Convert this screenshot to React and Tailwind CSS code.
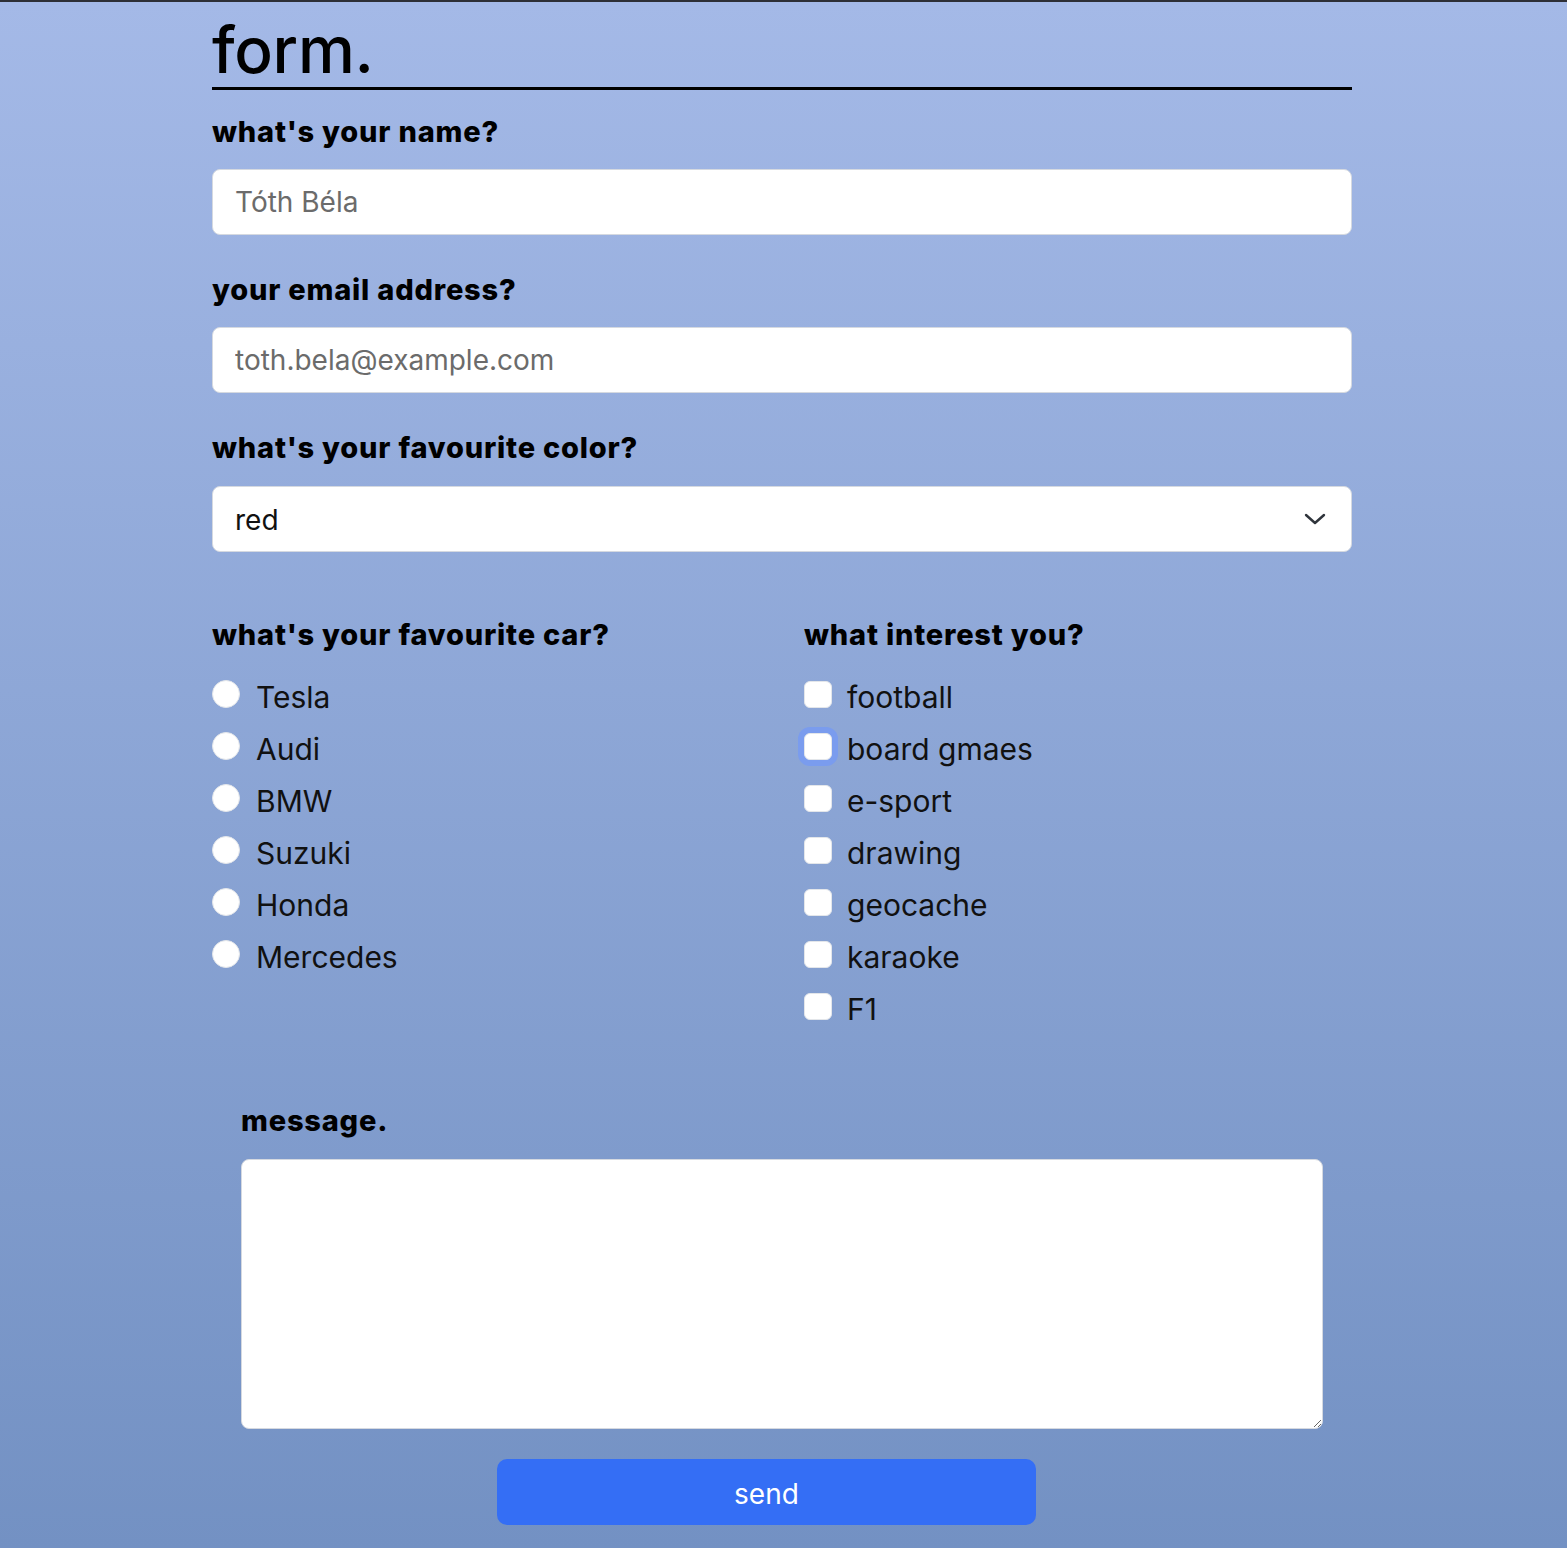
import React from "react";

const cars = ["Tesla", "Audi", "BMW", "Suzuki", "Honda", "Mercedes"];
const interests = ["football", "board gmaes", "e-sport", "drawing", "geocache", "karaoke", "F1"];

function Label({ children, className = "" }) {
  return (
    <label className={"block text-[29px] font-extrabold leading-[36px] tracking-[0.8px] text-black " + className}>
      {children}
    </label>
  );
}

export default function App() {
  return (
    <div
      className="min-h-screen border-t-2 border-[#2d2f36] bg-gradient-to-b from-[#a4b9e7] to-[#7391c3] pb-[22px]"
      style={{ fontFamily: "Inter, 'Noto Sans', 'Liberation Sans', sans-serif" }}
    >
      <div className="ml-[212px] w-[1140px]">
        <h1 className="mt-4 border-b-[3px] border-black pb-[5px] text-[64px] font-medium leading-none tracking-[-0.3px] text-black">
          form.
        </h1>

        <Label className="mt-[24px] mb-[19px]">what's your name?</Label>
        <input
          type="text"
          placeholder="Tóth Béla"
          className="block h-[66px] w-full rounded-lg border border-[#d5d9e0] bg-white px-[22px] text-[28px] text-[#222] placeholder:text-[#6b6b6b] outline-none"
        />

        <Label className="mt-[37px] mb-[19px]">your email address?</Label>
        <input
          type="email"
          placeholder="toth.bela@example.com"
          className="block h-[66px] w-full rounded-lg border border-[#d5d9e0] bg-white px-[22px] text-[28px] text-[#222] placeholder:text-[#6b6b6b] outline-none"
        />

        <Label className="mt-[37px] mb-[20px]">what's your favourite color?</Label>
        <div className="relative">
          <select
            defaultValue="red"
            className="block h-[66px] w-full appearance-none rounded-lg border border-[#d5d9e0] bg-white px-[22px] pt-[2px] text-[28px] text-[#111] outline-none"
          >
            <option value="red">red</option>
            <option value="green">green</option>
            <option value="blue">blue</option>
          </select>
          <svg
            className="pointer-events-none absolute right-[26px] top-[26px]"
            width="22"
            height="14"
            viewBox="0 0 22 14"
            fill="none"
          >
            <path d="M2 3l9 8 9-8" stroke="#2f343b" strokeWidth="2.4" strokeLinecap="round" strokeLinejoin="round" />
          </svg>
        </div>

        <div className="mt-[65px] grid grid-cols-[592px_1fr]">
          <div>
            <Label className="mb-[18px]">what's your favourite car?</Label>
            {cars.map((c) => (
              <label key={c} className="flex h-[52px] items-center gap-[16px] text-[30px] text-[#111]">
                <input
                  type="radio"
                  name="car"
                  className="-mt-[6px] h-[28px] w-[28px] appearance-none rounded-full border border-[#e3e6ea] bg-white"
                />
                <span>{c}</span>
              </label>
            ))}
          </div>
          <div>
            <Label className="mb-[18px]">what interest you?</Label>
            {interests.map((c, i) => (
              <label key={c} className="flex h-[52px] items-center gap-[15px] text-[30px] text-[#111]">
                <input
                  type="checkbox"
                  className={
                    "-mt-[6px] h-[27px] w-[28px] appearance-none rounded-[6px] border border-[#e3e6ea] bg-white " +
                    (i === 1 ? "shadow-[0_0_0_6px_#7a9cee]" : "")
                  }
                />
                <span>{c}</span>
              </label>
            ))}
          </div>
        </div>

        <div className="mt-[68px] px-[29px]">
          <Label className="mb-[20px]">message.</Label>
          <textarea className="block h-[270px] w-full rounded-lg border border-[#d5d9e0] bg-white p-4 text-[28px] outline-none" />
        </div>

        <button
          type="button"
          className="mt-[30px] ml-[285px] block h-[66px] w-[539px] rounded-[10px] bg-[#346ef5] pt-[3px] text-[28px] text-white"
        >
          send
        </button>
      </div>
    </div>
  );
}
